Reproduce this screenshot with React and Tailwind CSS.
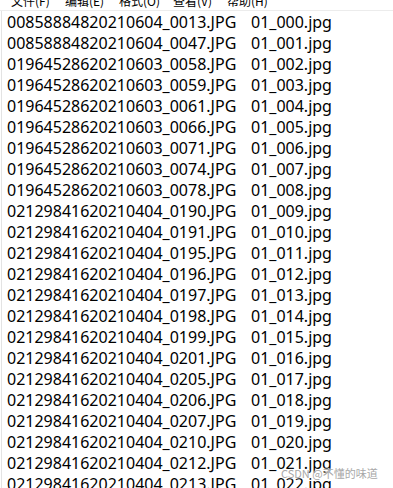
import React from "react";

const rows = [
  ["00858884820210604_0013.JPG", "01_000.jpg"],
  ["00858884820210604_0047.JPG", "01_001.jpg"],
  ["01964528620210603_0058.JPG", "01_002.jpg"],
  ["01964528620210603_0059.JPG", "01_003.jpg"],
  ["01964528620210603_0061.JPG", "01_004.jpg"],
  ["01964528620210603_0066.JPG", "01_005.jpg"],
  ["01964528620210603_0071.JPG", "01_006.jpg"],
  ["01964528620210603_0074.JPG", "01_007.jpg"],
  ["01964528620210603_0078.JPG", "01_008.jpg"],
  ["02129841620210404_0190.JPG", "01_009.jpg"],
  ["02129841620210404_0191.JPG", "01_010.jpg"],
  ["02129841620210404_0195.JPG", "01_011.jpg"],
  ["02129841620210404_0196.JPG", "01_012.jpg"],
  ["02129841620210404_0197.JPG", "01_013.jpg"],
  ["02129841620210404_0198.JPG", "01_014.jpg"],
  ["02129841620210404_0199.JPG", "01_015.jpg"],
  ["02129841620210404_0201.JPG", "01_016.jpg"],
  ["02129841620210404_0205.JPG", "01_017.jpg"],
  ["02129841620210404_0206.JPG", "01_018.jpg"],
  ["02129841620210404_0207.JPG", "01_019.jpg"],
  ["02129841620210404_0210.JPG", "01_020.jpg"],
  ["02129841620210404_0212.JPG", "01_021.jpg"],
  ["02129841620210404_0213.JPG", "01_022.jpg"],
];

const menus = ["文件(F)", "编辑(E)", "格式(O)", "查看(V)", "帮助(H)"];

export default function App() {
  return (
    <div className="relative w-[393px] h-[488px] overflow-hidden bg-white">
      <div className="h-[10px] overflow-hidden">
        <div
          className="flex -mt-[7px] pl-[11px] gap-[10px] text-[12px] leading-[16px] text-black"
          style={{ fontFamily: '"Noto Sans CJK SC", "Noto Sans", sans-serif' }}
        >
          {menus.map((m) => (
            <span key={m} className="w-[44px] whitespace-nowrap">{m}</span>
          ))}
        </div>
      </div>
      <div className="h-[1px] bg-[#ececec]" />
      <div
        className="ml-[1px] border-l border-[#e3e3e3] h-full pl-[5px] pt-[1px] text-[16px] leading-[21px] text-black"
        style={{ fontFamily: '"Noto Sans", "Open Sans", sans-serif' }}
      >
        {rows.map(([a, b]) => (
          <div key={a} className="flex whitespace-nowrap">
            <span className="w-[244px] shrink-0">{a}</span>
            <span>{b}</span>
          </div>
        ))}
      </div>
      <div
        className="absolute left-[281px] top-[465px] text-[11px] leading-[16px] text-[#a8a8a8] whitespace-nowrap"
        style={{
          fontFamily: '"Noto Sans CJK SC", "Noto Sans", sans-serif',
          textShadow: "0 0 2px #ffffff, 0 0 2px #ffffff",
        }}
      >
        CSDN @不懂的味道
      </div>
    </div>
  );
}
